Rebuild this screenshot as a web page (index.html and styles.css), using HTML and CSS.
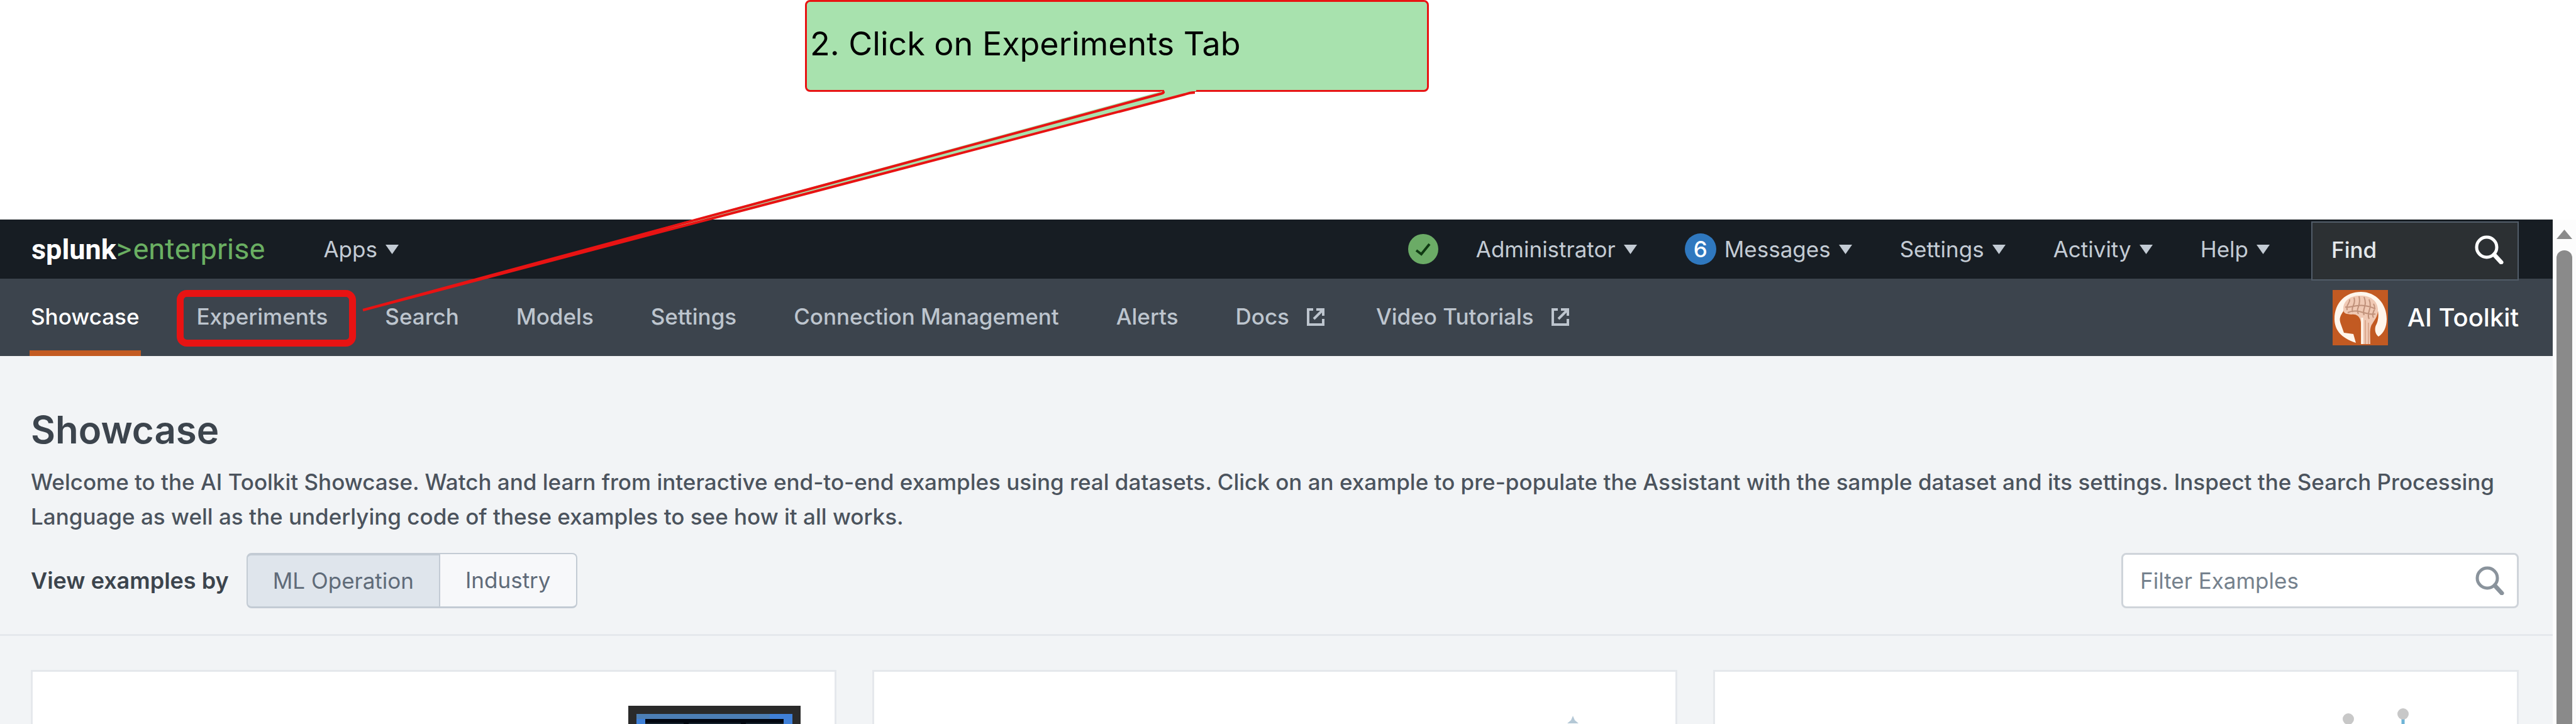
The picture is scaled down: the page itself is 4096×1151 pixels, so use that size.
FILE: index.html
```html
<!DOCTYPE html>
<html lang="en">
<head>
<meta charset="utf-8">
<title>AI Toolkit Showcase</title>
<link rel="stylesheet" href="styles.css">
</head>
<body>
<div class="guide">
  <div class="callout">
    <p class="callout-text">2. Click on Experiments Tab</p>
    <svg class="callout-tail" viewBox="0 0 1340 370" aria-hidden="true">
      <path d="M1275 10 V14 L1 363 L1312 18 Q1318 15 1326 15 V10 Z" fill="#a8e2ae"/>
      <path d="M1272 15 Q1277 17 1270 19 L1 363 L1308 20 Q1316 17 1324 17" fill="none" stroke="#e81313" stroke-width="4" stroke-linejoin="bevel"/>
    </svg>
  </div>
</div>
<div class="window">
  <div class="app">
    <header class="topbar">
      <a class="logo" href="#"><b>splunk</b><span class="logo-gt">&gt;</span><span class="logo-product">enterprise</span></a>
      <button class="menu" type="button">Apps<svg class="caret" viewBox="0 0 21 15"><path d="M0 0H21L10.500 15Z"/></svg></button>
      <div class="topbar-right">
        <svg class="status" viewBox="0 0 48 48"><circle cx="24" cy="24" r="24" fill="#6bab66"/><path d="M13 26L21 32L34 16" fill="none" stroke="#0f3a12" stroke-width="4"/></svg>
        <button class="menu" type="button">Administrator<svg class="caret" viewBox="0 0 21 15"><path d="M0 0H21L10.500 15Z"/></svg></button>
        <button class="menu" type="button"><span class="badge">6</span>Messages<svg class="caret" viewBox="0 0 21 15"><path d="M0 0H21L10.500 15Z"/></svg></button>
        <button class="menu" type="button">Settings<svg class="caret" viewBox="0 0 21 15"><path d="M0 0H21L10.500 15Z"/></svg></button>
        <button class="menu" type="button">Activity<svg class="caret" viewBox="0 0 21 15"><path d="M0 0H21L10.500 15Z"/></svg></button>
        <button class="menu" type="button">Help<svg class="caret" viewBox="0 0 21 15"><path d="M0 0H21L10.500 15Z"/></svg></button>
        <div class="find">
          <input class="find-input" type="text" aria-label="Find" placeholder="Find">
          <svg class="lens" viewBox="0 0 46 46"><circle cx="19" cy="19" r="16" stroke-width="5"/><path d="M31 31L42 43" stroke-width="7" stroke-linecap="round"/></svg>
        </div>
      </div>
    </header>
    <nav class="appnav">
      <a class="tab tab-active" href="#">Showcase</a>
      <a class="tab tab-marked" href="#">Experiments</a>
      <a class="tab" href="#">Search</a>
      <a class="tab" href="#">Models</a>
      <a class="tab" href="#">Settings</a>
      <a class="tab" href="#">Connection Management</a>
      <a class="tab" href="#">Alerts</a>
      <a class="tab" href="#">Docs<svg class="ext" viewBox="0 0 30 30"><path d="M11 3H3V27H27V18M16 3H27V13M26 4L12 18"/></svg></a>
      <a class="tab" href="#">Video Tutorials<svg class="ext" viewBox="0 0 30 30"><path d="M11 3H3V27H27V18M16 3H27V13M26 4L12 18"/></svg></a>
      <a class="appname" href="#">
        <svg class="appicon" viewBox="0 0 88 88">
          <rect width="88" height="88" fill="#c25a22"/>
          <path d="M37 84C12 76 3 62 3 46C3 20 21 3 45 3C69 3 86 22 86 46C86 58 82 68 73 74C67 70 66 60 70 54C76 40 74 12 45 10C20 12 18 28 17 34C10 44 11 48 13 54L18 68L33 70Z" fill="#fff6ec"/>
          <path d="M17 32C16 16 30 8 45 9C63 9 73 20 72 34C71 44 66 48 63 54C58 60 60 74 60 86H45V52C44 42 38 38 30 39C22 38 18 38 17 32Z" fill="#f0c9b4"/>
          <path d="M23 32C21 22 28 22 27 15M32 35C28 26 38 24 34 12M41 38C36 28 46 26 42 10M50 40C46 30 56 26 50 11M58 46C53 36 64 30 58 15M65 44C60 36 71 32 65 22M20 27C30 30 40 18 68 30M24 36C40 28 56 42 68 38" fill="none" stroke="#c0917a" stroke-width="2"/>
          <path d="M52 48V86M57 52V86" fill="none" stroke="#c98a6a" stroke-width="1"/>
          <path d="M47 44V86" fill="none" stroke="#fff6ec" stroke-width="3"/>
        </svg>
        AI Toolkit
      </a>
    </nav>
    <main>
      <section class="intro">
        <h1>Showcase</h1>
        <p>Welcome to the AI Toolkit Showcase. Watch and learn from interactive end-to-end examples using real datasets. Click on an example to pre-populate the Assistant with the sample dataset and its settings. Inspect the Search Processing Language as well as the underlying code of these examples to see how it all works.</p>
        <div class="controls">
          <span class="controls-label" id="view-by">View examples by</span>
          <div class="segmented" role="group" aria-labelledby="view-by">
            <button class="segment segment-on" type="button" aria-pressed="true">ML Operation</button>
            <button class="segment" type="button" aria-pressed="false">Industry</button>
          </div>
          <div class="filter">
            <input class="filter-input" type="text" aria-label="Filter Examples" placeholder="Filter Examples">
            <svg class="lens lens-muted" viewBox="0 0 46 46"><circle cx="19" cy="19" r="16" stroke-width="5"/><path d="M31 31L42 43" stroke-width="7" stroke-linecap="round"/></svg>
          </div>
        </div>
      </section>
      <section class="cards">
        <article class="card">
          <svg class="art" viewBox="0 0 274 274" preserveAspectRatio="xMidYMin slice"><rect width="274" height="274" fill="#2a2a2a"/><rect x="13" y="13" width="248" height="248" fill="#3f80d8"/><rect x="13" y="13" width="212" height="8" fill="#4c7eb4"/><rect x="27" y="21" width="220" height="226" fill="#02060f"/><path d="M27 27H88V80H27ZM96 27H179V80H96ZM187 27H247V80H187Z" fill="#14202b"/></svg>
        </article>
        <article class="card">
          <svg class="art" viewBox="0 0 274 274" preserveAspectRatio="xMidYMin slice"><path d="M165 16L168 23L174 28H156L162 23Z" fill="#b4c8d6"/></svg>
        </article>
        <article class="card">
          <svg class="art" viewBox="0 0 274 274" preserveAspectRatio="xMidYMin slice"><path d="M147 14V80M60 26V80" stroke="#6fb4d6" stroke-width="5"/><circle cx="147" cy="13" r="9" fill="#c8c8c8"/><circle cx="60" cy="21" r="9" fill="#c8c8c8"/></svg>
        </article>
      </section>
    </main>
  </div>
  <div class="scrollbar" aria-hidden="true">
    <svg class="scroll-up" viewBox="0 0 25 15"><path d="M12.500 0L25 15H0Z"/></svg>
    <div class="scroll-thumb"></div>
  </div>
</div>
</body>
</html>
```
FILE: styles.css
```css
* { box-sizing: border-box; }

html, body { height: 100%; }

body {
  display: flex;
  flex-direction: column;
  margin: 0;
  overflow: hidden;
  background: #fff;
  color: #3c444d;
  font-family: Inter, "Liberation Sans", sans-serif;
  font-size: 35px;
  font-weight: 500;
  line-height: 55px;
}

button, input {
  font: inherit;
  font-weight: 400;
  color: inherit;
}

a { color: inherit; text-decoration: none; }

.guide {
  flex: none;
  height: 349px;
  padding-left: 1280px;
}

.callout {
  position: relative;
  width: 992px;
  height: 146px;
  border: 3px solid #e81313;
  border-radius: 8px;
  background: #a8e2ae;
}

.callout-text {
  margin: 0;
  padding: 36px 5px;
  color: #000;
  font-size: 52px;
  font-weight: 400;
  line-height: 62px;
}

.callout-tail {
  position: absolute;
  top: 127px;
  left: -707px;
  z-index: 2;
  width: 1340px;
  height: 370px;
}

.window {
  display: flex;
  flex: 1;
  min-height: 0;
}

.app {
  display: flex;
  flex: 1;
  flex-direction: column;
  min-width: 0;
  background: #f2f4f6;
}

.topbar {
  display: flex;
  flex: none;
  align-items: center;
  height: 94px;
  padding: 0 54px 0 50px;
  background: #171d23;
  color: #c3cbd4;
}

.logo {
  display: flex;
  align-items: baseline;
  margin-right: 93px;
  color: #fff;
  font-family: Roboto, sans-serif;
  font-size: 47px;
  font-weight: 400;
}

.logo b { font-size: 45px; }

.logo-gt, .logo-product { color: #6aaf62; }

.logo-gt { margin-right: 2px; }

.menu {
  display: flex;
  align-items: center;
  padding: 0;
  border: 0;
  background: none;
}

.caret {
  width: 21px;
  height: 15px;
  margin-left: 13px;
  fill: currentColor;
}

.topbar-right {
  display: flex;
  gap: 76px;
  align-items: center;
  align-self: stretch;
  margin-left: auto;
}

.status {
  width: 48px;
  height: 48px;
  margin-right: -16px;
}

.badge {
  width: 50px;
  height: 50px;
  margin-right: 13px;
  border-radius: 50%;
  background: #2f78bf;
  color: #fff;
  font-weight: 500;
  line-height: 50px;
  text-align: center;
}

.find {
  position: relative;
  display: flex;
  flex: none;
  align-items: center;
  align-self: flex-end;
  width: 330px;
  height: 94px;
  margin: 0 0 -3px -10px;
  padding: 0 22px 4px 30px;
  border: 2px solid #525c68;
  background: #2c3033;
  color: #fff;
}

.find-input, .filter-input {
  flex: 1;
  min-width: 0;
  padding: 0;
  border: 0;
  outline: 0;
  background: none;
}

.find-input { font-weight: 500; }

.find-input::placeholder { color: #e4e8ec; opacity: 1; }

.lens {
  flex: none;
  width: 46px;
  height: 46px;
  fill: none;
  stroke: currentColor;
}

.appnav {
  display: flex;
  flex: none;
  gap: 87px;
  height: 123px;
  padding: 0 54px 0 47px;
  background: #3c444d;
  color: #bdc5ce;
}

.tab {
  display: flex;
  align-items: center;
  padding: 7px 2px 0;
  border-bottom: 9px solid transparent;
}

.tab-active {
  border-color: #c35b22;
  color: #fff;
}

.tab-marked { position: relative; }

.tab-marked::after {
  content: "";
  position: absolute;
  top: 18px;
  left: -30px;
  box-sizing: border-box;
  width: 285px;
  height: 90px;
  border: 11px solid #e81313;
  border-radius: 16px;
}

.ext {
  width: 30px;
  height: 30px;
  margin: 0 -10px 0 27px;
  fill: none;
  stroke: currentColor;
  stroke-width: 4;
}

.appname {
  display: flex;
  gap: 31px;
  align-items: center;
  margin-left: auto;
  color: #fff;
  font-size: 40px;
}

.appicon { width: 88px; height: 88px; }

main {
  display: flex;
  flex: 1;
  flex-direction: column;
  min-height: 0;
}

.intro {
  flex: none;
  padding: 82px 54px 41px 49px;
  border-bottom: 3px solid #e5e8ec;
}

h1 {
  margin: 0;
  font-size: 60px;
  font-weight: 600;
  line-height: 70px;
}

.intro p {
  margin: 21px 0 0;
  color: #4b535d;
}

.controls {
  display: flex;
  align-items: center;
  margin-top: 30px;
}

.controls-label {
  margin-right: 28px;
  font-size: 36px;
  font-weight: 600;
}

.segmented { display: flex; }

.segment {
  height: 88px;
  padding: 0 40px;
  border: 2px solid #c3cbd4;
  border-bottom-width: 3px;
  border-left: 0;
  border-radius: 0 8px 8px 0;
  background: #f7f8fa;
  color: #5f6b79;
}

.segment-on {
  border-top-width: 4px;
  border-left: 2px solid #c3cbd4;
  border-radius: 8px 0 0 8px;
  background: #dfe5ec;
}

.filter {
  display: flex;
  align-items: center;
  width: 632px;
  height: 88px;
  margin-left: auto;
  padding: 0 20px 0 27px;
  border: 3px solid #cfd4da;
  border-radius: 8px;
  background: #fff;
}

.filter-input::placeholder { color: #75818d; opacity: 1; }

.lens-muted { color: #8a939c; }

.cards {
  display: grid;
  flex: 1;
  grid-template-columns: repeat(3, 1fr);
  gap: 57px;
  min-height: 0;
  padding: 54px 54px 0 49px;
}

.card {
  display: flex;
  justify-content: flex-end;
  min-height: 0;
  padding: 54px 54px 0;
  border: 3px solid #e5e8ec;
  border-bottom: 0;
  background: #fff;
}

.art {
  width: 274px;
  height: 100%;
  max-height: 274px;
}

.scrollbar {
  display: flex;
  flex-direction: column;
  align-items: center;
  width: 37px;
  padding-top: 16px;
  background: #fcfcfc;
}

.scroll-up {
  flex: none;
  width: 25px;
  height: 15px;
  fill: #8a8a8a;
}

.scroll-thumb {
  flex: 1;
  width: 25px;
  margin-top: 18px;
  border-radius: 12px 12px 0 0;
  background: #8a8a8a;
}
```
